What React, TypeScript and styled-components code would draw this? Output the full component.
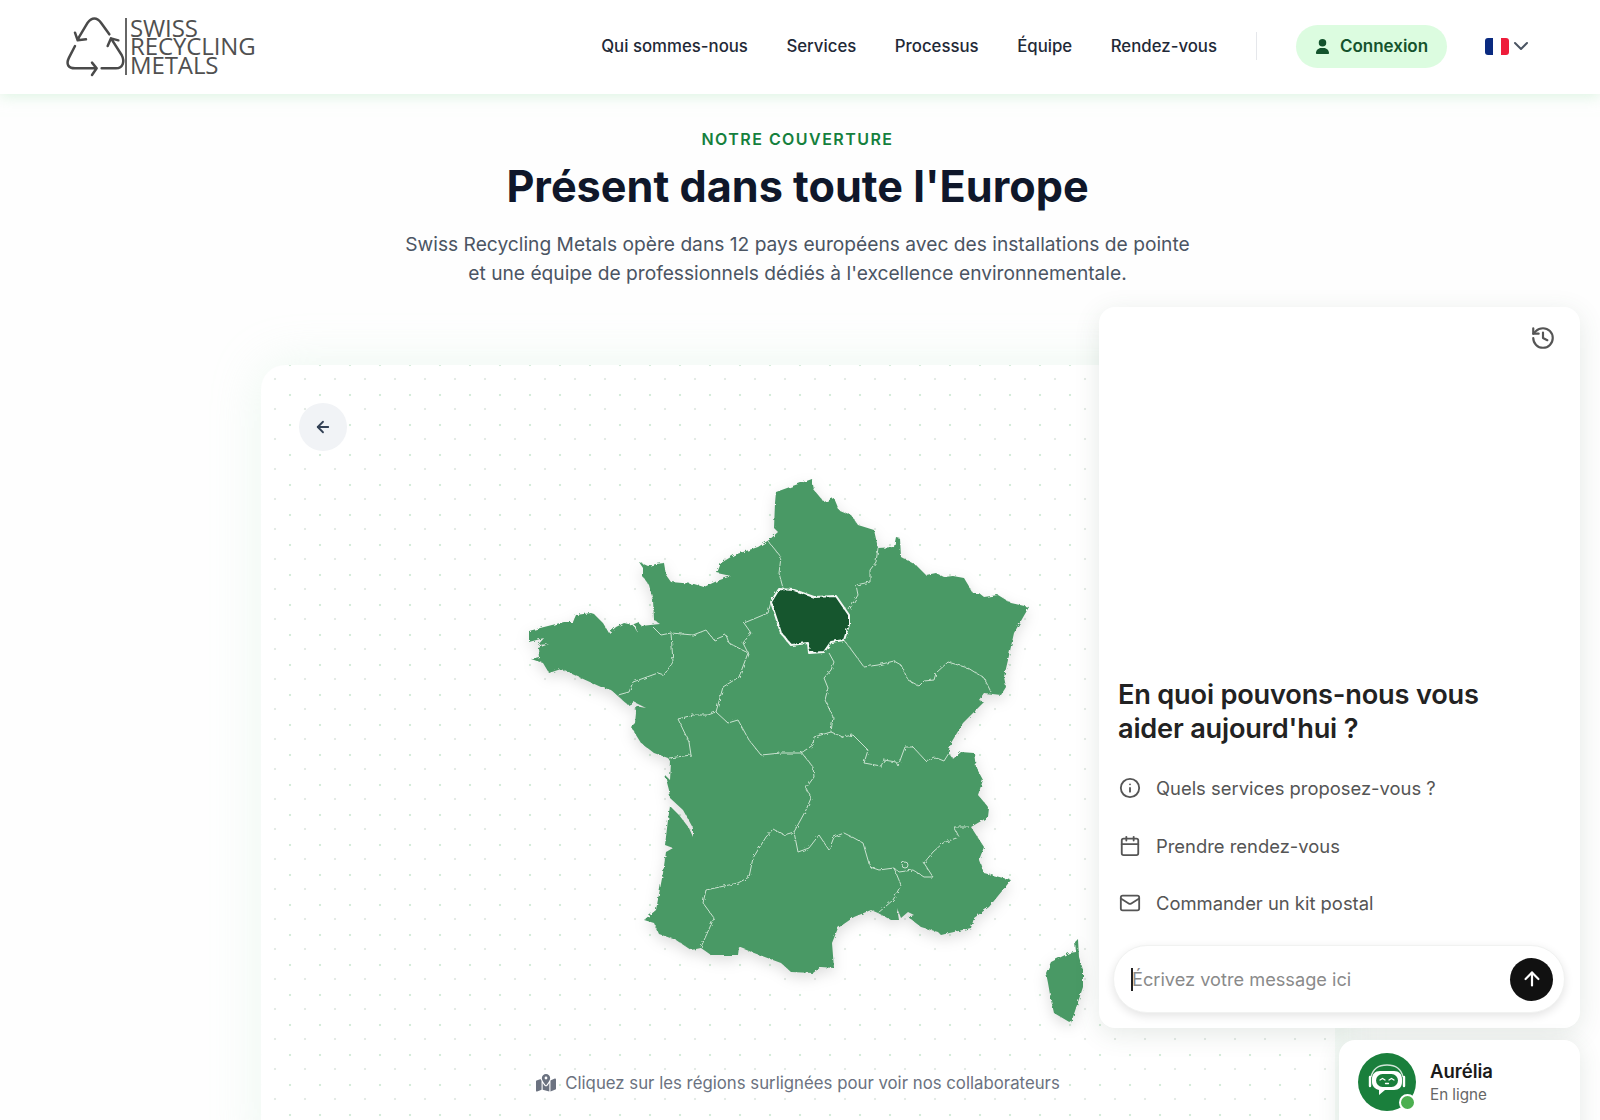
import React from "react";
import styled, { createGlobalStyle } from "styled-components";
import { ArrowLeft, ArrowUp, Calendar, ChevronDown, History, Info, Mail } from "lucide-react";
import { FaMapLocationDot, FaUser } from "react-icons/fa6";

const Global = createGlobalStyle`
  html, body { margin: 0; padding: 0; height: 100%; overflow: hidden; background: #fefefe; }
  body { font-family: Inter, "Liberation Sans", sans-serif; }
  * { box-sizing: border-box; }
`;

const Page = styled.div`
  position: relative;
  height: 1120px;
  overflow: hidden;
  background: #fefefe;
`;

const Header = styled.header`
  height: 94px;
  display: flex;
  align-items: center;
  justify-content: space-between;
  padding: 0 67px 2px 61px;
  background: #fff;
  box-shadow: 0 2px 14px rgba(190, 235, 200, 0.55);
  position: relative;
`;

const Logo = styled.div`
  display: flex;
  align-items: center;
`;

const LogoText = styled.div`
  margin-left: -6px;
  padding: 1px 0 0 3px;
  border-left: 2px solid #666;
  font-family: "Open Sans", sans-serif;
  font-weight: 400;
  font-size: 24px;
  line-height: 18.8px;
  color: #505050;
  height: 57px;
  letter-spacing: -0.1px;
  display: flex;
  flex-direction: column;
`;

const Right = styled.div`
  display: flex;
  align-items: center;
`;

const Nav = styled.nav`
  display: flex;
  gap: 38.5px;
`;

const NavLink = styled.a`
  font-size: 16.8px;
  font-weight: 500;
  color: #1f2937;
`;

const Divider = styled.div`
  width: 1px;
  height: 28px;
  background: #e5e7eb;
  margin: 0 39px;
`;

const LoginButton = styled.button`
  height: 43px;
  width: 151px;
  border: 0;
  border-radius: 22px;
  background: #dcfce0;
  color: #14532d;
  font: 600 17px Inter, sans-serif;
  display: flex;
  align-items: center;
  justify-content: center;
  gap: 10px;
`;

const Lang = styled.div`
  display: flex;
  align-items: center;
  gap: 0;
  margin-left: 38px;
  color: #4b5563;
`;

const Intro = styled.section`
  text-align: center;
  padding: 33px 5px 0 0;
`;

const Eyebrow = styled.div`
  font-size: 16px;
  line-height: 24px;
  font-weight: 600;
  letter-spacing: 1.45px;
  color: #15803d;
`;

const Title = styled.h1`
  margin: 8px 0 0;
  font-size: 43.2px;
  line-height: 54px;
  font-weight: 700;
  color: #0f172a;
`;

const Lead = styled.p`
  margin: 17px 0 0;
  font-size: 19.2px;
  line-height: 29px;
  color: #4b5563;
`;

const MapCard = styled.section`
  width: 1074px;
  height: 800px;
  margin: 77px 0 0 261px;
  border-radius: 24px;
  padding: 38px;
  background-color: #fff;
  background-image: radial-gradient(circle, #d5ecda 1px, transparent 1.6px),
    radial-gradient(circle, #e4ebe6 1px, transparent 1.6px);
  background-size: 30px 30px;
  background-position: 14px -15px, -1px -1px;
  box-shadow: 0 0 50px rgba(190, 235, 205, 0.28);
`;

const BackButton = styled.button`
  width: 48px;
  height: 48px;
  border: 0;
  border-radius: 50%;
  background: #f1f3f6;
  color: #334155;
  display: flex;
  align-items: center;
  justify-content: center;
`;

const MapStage = styled.div`
  display: flex;
  justify-content: center;
  margin-top: 19px;
  padding-left: 15px;
`;

const MapSvg = styled.svg`
  display: block;
  filter: drop-shadow(0 5px 7px rgba(0, 0, 0, 0.13));
`;

const Hint = styled.div`
  margin-top: 41px;
  display: flex;
  align-items: center;
  justify-content: center;
  gap: 9px;
  font-size: 16.8px;
  line-height: 24px;
  color: #6b7280;
`;

const ChatPanel = styled.aside`
  position: absolute;
  left: 1099px;
  top: 307px;
  width: 481px;
  height: 721px;
  background: #fff;
  border-radius: 16px;
  box-shadow: 0 6px 26px rgba(60, 90, 70, 0.13);
  display: flex;
  flex-direction: column;
  justify-content: flex-end;
  padding: 0 15px 15px 14px;
`;

const HistoryButton = styled.div`
  position: absolute;
  top: 18px;
  right: 24px;
  color: #555;
`;

const ChatTitle = styled.h2`
  margin: 0 0 14px 5px;
  font-size: 27.2px;
  line-height: 34px;
  font-weight: 600;
  letter-spacing: -0.2px;
  color: #222;
`;

const Suggestion = styled.div`
  display: flex;
  align-items: center;
  gap: 15px;
  height: 57.5px;
  padding-left: 6px;
  font-size: 18.4px;
  color: #555;
`;

const InputBar = styled.div`
  margin-top: 13px;
  height: 68px;
  border-radius: 34px;
  background: #fff;
  border: 1px solid #f1f2f1;
  box-shadow: 0 3px 10px rgba(0, 0, 0, 0.11);
  display: flex;
  align-items: center;
  justify-content: space-between;
  padding: 0 11px 0 18px;
`;

const Placeholder = styled.div`
  font-size: 18.2px;
  color: #8a8a8a;
  position: relative;
  line-height: 23px;
  &::before {
    content: "";
    position: absolute;
    left: -1px;
    top: 0;
    bottom: 0;
    width: 2px;
    background: #222;
  }
`;

const SendButton = styled.button`
  width: 43px;
  height: 43px;
  border: 0;
  border-radius: 50%;
  background: #111;
  color: #fff;
  display: flex;
  align-items: center;
  justify-content: center;
`;

const AgentCard = styled.aside`
  position: absolute;
  left: 1339px;
  top: 1040px;
  width: 241px;
  height: 110px;
  background: #fff;
  border-radius: 16px;
  box-shadow: 0 4px 22px rgba(60, 90, 70, 0.13);
  display: flex;
  align-items: flex-start;
  padding: 13px 19px;
  gap: 14px;
`;

const Avatar = styled.div`
  position: relative;
  width: 58px;
  height: 58px;
  border-radius: 50%;
  background: #1a7f3c;
`;

const Status = styled.span`
  position: absolute;
  right: 0;
  bottom: 0;
  width: 17px;
  height: 17px;
  border-radius: 50%;
  background: #4caf50;
  border: 2.5px solid #fff;
`;

const AgentName = styled.div`
  margin-top: 6px;
  font-size: 18.5px;
  line-height: 24px;
  font-weight: 600;
  color: #1a1a1a;
`;

const AgentState = styled.div`
  margin-top: 2px;
  font-size: 15.2px;
  line-height: 20px;
  color: #666;
`;

const france =
  "M811 479L775 492L774 503L773 528L777 532L768 540L757 547L733 555L720 563L716 573L730 576L716 581L703 587L693 584L670 582L665 575L663 563L655 564L647 566L638 562L642 568L642 577L648 585L652 600L653 620L659 624L640 626L638 622L633 624L637 633L632 625L623 623L615 627L608 633L602 623L593 614L590 613L575 615L572 622L563 622L543 627L528 631L528 642L543 638L537 645L548 644L537 648L538 657L530 659L542 663L548 673L560 669L580 678L600 687L610 690L618 697L627 705L633 702L645 708L634 706L635 713L634 723L630 727L640 743L653 753L667 758L670 762L669 780L664 775L668 790L669 798L682 810L692 828L692 837L688 828L678 815L669 806L667 820L664 845L672 848L665 852L662 873L655 910L643 920L653 923L658 934L675 940L690 950L700 948L710 955L737 955L738 947L753 953L780 963L790 972L812 973L820 967L833 968L831 943L837 928L853 917L870 910L877 913L890 920L898 920L896 908L900 918L907 912L913 915L907 917L920 927L937 932L940 935L970 928L973 918L988 907L1010 880L983 873L978 860L983 847L970 827L987 817L988 808L977 795L982 780L975 767L973 753L960 752L953 758L943 768L955 762L947 753L950 743L962 723L983 702L978 700L983 693L1000 695L1005 687L1003 677L1007 660L1013 633L1028 607L1010 603L997 595L983 597L978 593L972 593L963 578L952 576L943 577L935 573L925 575L915 565L900 557L899 538L895 537L893 547L877 548L873 530L857 525L850 515L838 510L833 498L823 502L813 490Z";
const corsica =
  "M1077 939L1078 957L1082 970L1082 987L1070 1023L1053 1013L1050 1000L1047 983L1045 973L1050 962L1068 953L1075 952L1074 942Z";
const ile =
  "M778 589L793 590L813 597L835 596L848 615L848 625L843 640L830 642L823 652L808 653L807 643L790 645L780 633L770 602Z";
const borders = [
  "M767 541L780 557L778 573L782 588",
  "M877 548L875 562L869 570L869 582L855 585L857 595L848 610",
  "M843 640L852 652L863 667L877 665L893 661L900 665L907 680L918 686L923 681L933 680L935 673L947 662L967 668L983 678L990 692",
  "M828 653L833 662L830 670L823 678L827 688L824 700L832 717L830 732L842 737L852 735L867 750L863 763L880 766L883 760L895 762L897 766L904 747L912 747L925 761L933 757L943 761L948 753",
  "M830 732L813 737L812 745L800 753L780 753L760 755L748 740L737 720L727 723L715 712",
  "M800 752L812 767L813 777L805 788L810 798L805 810L793 832",
  "M793 832L797 852L808 848L818 835L828 850L833 837L843 833L853 838L862 843L869 867L878 870L893 868",
  "M893 868L900 885L892 900L877 913",
  "M893 868L898 872L912 870L923 877L932 877L923 863L932 852L942 843L958 837L953 827L968 827",
  "M793 832L783 835L772 829L765 837L752 858L748 877L737 883L705 890L702 903L713 918L700 947",
  "M668 758L690 755L688 742L677 719L692 715L707 715L715 712",
  "M715 712L722 687L738 677L747 653",
  "M747 653L728 643L725 635L713 640L705 630L692 635L670 633L660 635L652 627",
  "M670 633L672 662L663 675L657 673L632 682L628 692L617 695",
  "M747 653L742 643L750 633L743 623L767 613L770 602",
];

const RecycleLogo = () => (
  <svg width="70" height="70" viewBox="0 0 210 210" fill="none" stroke="#4a4a4a" strokeWidth="7.5" strokeLinecap="round" strokeLinejoin="round">
    <path d="M145 70L120 35C108 18 92 18 80 35L50 85M42 65L50 88L75 85" />
    <path d="M122 172H165C186 172 192 152 182 132L150 82M140 105L150 82L172 88" />
    <path d="M42 105L24 140C14 160 22 172 42 172H105M93 155L107 172L93 192" />
  </svg>
);

const FlagFr = () => (
  <svg width="24" height="17" viewBox="0 0 24 17">
    <path d="M3 0H8V17H3A3 3 0 0 1 0 14V3A3 3 0 0 1 3 0Z" fill="#0a2a80" />
    <path d="M8 0H16V17H8Z" fill="#fff" />
    <path d="M16 0H21A3 3 0 0 1 24 3V14A3 3 0 0 1 21 17H16Z" fill="#ee1c3a" />
  </svg>
);

const FranceMap = () => (
  <MapSvg width="570" height="560" viewBox="520 470 570 560">
    <defs>
      <filter id="rough" x="-5%" y="-5%" width="110%" height="110%">
        <feTurbulence type="fractalNoise" baseFrequency="0.28" numOctaves="2" seed="4" />
        <feDisplacementMap in="SourceGraphic" scale="3.5" />
      </filter>
    </defs>
    <g filter="url(#rough)">
      <path d={france} fill="#4a9965" />
      <path d={corsica} fill="#4a9965" />
      <g fill="none" stroke="#c9e2d0" strokeWidth="1" strokeLinejoin="round">
        {borders.map((d) => (
          <path key={d} d={d} />
        ))}
        <circle cx="904" cy="865" r="3" />
      </g>
      <path d={ile} fill="#14562f" stroke="#f4f8f5" strokeWidth="2" strokeLinejoin="round" />
    </g>
  </MapSvg>
);

const RobotFace = () => (
  <svg width="58" height="58" viewBox="0 0 58 58" fill="none">
    <path d="M12 24V33M46 24V33" stroke="#fff" strokeWidth="2.4" strokeLinecap="round" />
    <path d="M13 24C15 15 21 12 29 12C37 12 43 15 45 24" stroke="#fff" strokeWidth="1.3" opacity="0.8" />
    <path d="M22 18H36C41 18 44 21 44 26V29C44 34 41 37 36 37H27L21 42V37C17 36 14 33 14 29V26C14 21 17 18 22 18Z" fill="#fff" />
    <rect x="18" y="21" width="22" height="13" rx="6.5" fill="#1a7f3c" />
    <path d="M22 27L24.5 25.5L27 27M31 27L33.5 25.5L36 27M27.5 30.5H30.5" stroke="#fff" strokeWidth="1.3" strokeLinecap="round" />
  </svg>
);

export default function App() {
  return (
    <Page>
      <Global />
      <Header>
        <Logo>
          <RecycleLogo />
          <LogoText>
            <span>SWISS</span>
            <span>RECYCLING</span>
            <span>METALS</span>
          </LogoText>
        </Logo>
        <Right>
          <Nav>
            <NavLink>Qui sommes-nous</NavLink>
            <NavLink>Services</NavLink>
            <NavLink>Processus</NavLink>
            <NavLink>Équipe</NavLink>
            <NavLink>Rendez-vous</NavLink>
          </Nav>
          <Divider />
          <LoginButton>
            <FaUser size={15} />
            Connexion
          </LoginButton>
          <Lang>
            <FlagFr />
            <ChevronDown size={24} />
          </Lang>
        </Right>
      </Header>
      <Intro>
        <Eyebrow>NOTRE COUVERTURE</Eyebrow>
        <Title>Présent dans toute l'Europe</Title>
        <Lead>
          Swiss Recycling Metals opère dans 12 pays européens avec des installations de pointe
          <br />
          et une équipe de professionnels dédiés à l'excellence environnementale.
        </Lead>
      </Intro>
      <MapCard>
        <BackButton>
          <ArrowLeft size={18} strokeWidth={2.4} />
        </BackButton>
        <MapStage>
          <FranceMap />
        </MapStage>
        <Hint>
          <FaMapLocationDot size={20} />
          Cliquez sur les régions surlignées pour voir nos collaborateurs
        </Hint>
      </MapCard>
      <ChatPanel>
        <HistoryButton>
          <History size={26} />
        </HistoryButton>
        <ChatTitle>
          En quoi pouvons-nous vous
          <br />
          aider aujourd'hui ?
        </ChatTitle>
        <Suggestion>
          <Info size={22} />
          Quels services proposez-vous ?
        </Suggestion>
        <Suggestion>
          <Calendar size={22} />
          Prendre rendez-vous
        </Suggestion>
        <Suggestion>
          <Mail size={22} />
          Commander un kit postal
        </Suggestion>
        <InputBar>
          <Placeholder>Écrivez votre message ici</Placeholder>
          <SendButton>
            <ArrowUp size={22} strokeWidth={2.4} />
          </SendButton>
        </InputBar>
      </ChatPanel>
      <AgentCard>
        <Avatar>
          <RobotFace />
          <Status />
        </Avatar>
        <div>
          <AgentName>Aurélia</AgentName>
          <AgentState>En ligne</AgentState>
        </div>
      </AgentCard>
    </Page>
  );
}
